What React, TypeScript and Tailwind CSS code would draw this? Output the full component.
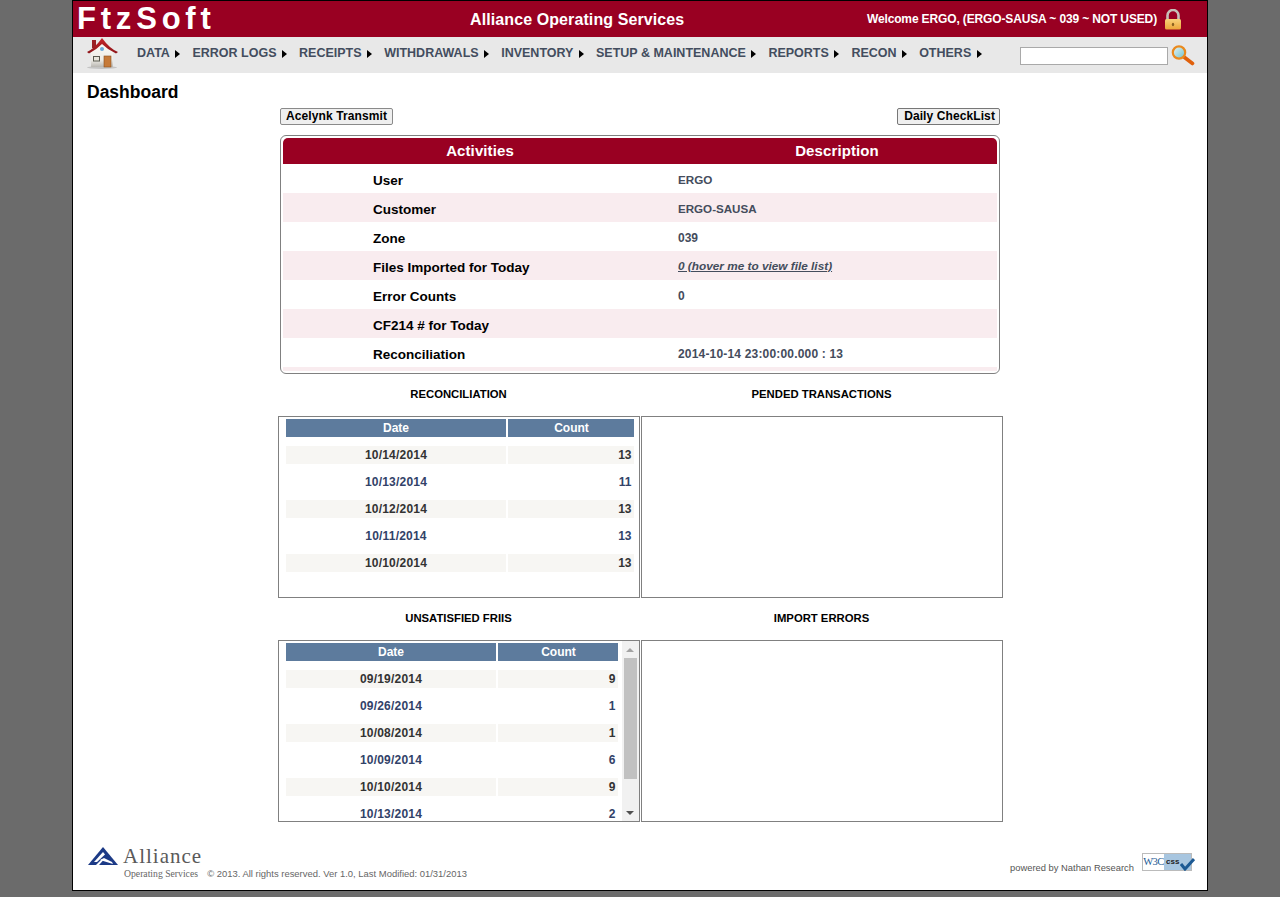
const menu = ["DATA", "ERROR LOGS", "RECEIPTS", "WITHDRAWALS", "INVENTORY", "SETUP & MAINTENANCE", "REPORTS", "RECON", "OTHERS"];
const activities: [string, React.ReactNode, string][] = [
  ["User", "ERGO", "text-[11.7px]"],
  ["Customer", "ERGO-SAUSA", "text-[11.6px]"],
  ["Zone", "039", "text-[12px]"],
  ["Files Imported for Today", <a className="italic underline">0 (hover me to view file list)</a>, "text-[11.8px]"],
  ["Error Counts", "0", "text-[12px]"],
  ["CF214 # for Today", "", "text-[12px]"],
  ["Reconciliation", "2014-10-14 23:00:00.000 : 13", "text-[12px] tracking-[0.18px]"],
];
const recon: [string, string][] = [["10/14/2014", "13"], ["10/13/2014", "11"], ["10/12/2014", "13"], ["10/11/2014", "13"], ["10/10/2014", "13"]];
const friis: [string, string][] = [["09/19/2014", "9"], ["09/26/2014", "1"], ["10/08/2014", "1"], ["10/09/2014", "6"], ["10/10/2014", "9"], ["10/13/2014", "2"]];

function House() {
  return (
    <svg width="34" height="32" viewBox="0 0 34 32" className="mb-[4px] shrink-0">
      <defs>
        <linearGradient id="wall" x1="0" y1="0" x2="0" y2="1">
          <stop offset="0" stopColor="#fbfaf6" />
          <stop offset="0.7" stopColor="#eeece6" />
          <stop offset="1" stopColor="#b9b7b2" />
        </linearGradient>
        <linearGradient id="roof" x1="0" y1="0" x2="0" y2="1">
          <stop offset="0" stopColor="#c8262c" />
          <stop offset="1" stopColor="#8c1418" />
        </linearGradient>
      </defs>
      <ellipse cx="16" cy="30.5" rx="15" ry="1.4" fill="#c4c4c4" />
      <path d="M5 14 L16 6 L27 14 V30 H5 Z" fill="url(#wall)" />
      <rect x="6" y="3" width="4" height="8" fill="#9a2024" />
      <path d="M1 15 Q8 12 16 1 Q24 12 32 15 L30 16.5 Q22 13 16 7 Q10 13 3 16.5 Z" fill="url(#roof)" />
      <circle cx="16" cy="12" r="2" fill="#6aa8d8" />
      <rect x="18" y="19" width="7" height="11" fill="#c67a38" stroke="#8a5020" strokeWidth="0.6" />
      <rect x="7.5" y="19.5" width="6" height="4.5" fill="#e8e6dc" stroke="#5a5a50" strokeWidth="1" />
    </svg>
  );
}

function Lock() {
  return (
    <svg width="18" height="21" viewBox="0 0 18 21" className="shrink-0">
      <defs>
        <linearGradient id="lockbody" x1="0" y1="0" x2="0" y2="1">
          <stop offset="0" stopColor="#f8d27a" />
          <stop offset="1" stopColor="#eca53a" />
        </linearGradient>
      </defs>
      <path d="M3.5 11 V6.5 a5.5 5.5 0 0 1 11 0 V11" fill="none" stroke="#c6c0b8" strokeWidth="2.6" />
      <rect x="1" y="10" width="16" height="10.5" rx="1.5" fill="url(#lockbody)" />
      <ellipse cx="9" cy="15.5" rx="1.2" ry="1.8" fill="#8a6020" />
    </svg>
  );
}

function Magnifier() {
  return (
    <svg width="24" height="21" viewBox="0 0 24 21" className="shrink-0">
      <defs>
        <linearGradient id="lens" x1="0" y1="0" x2="1" y2="1">
          <stop offset="0" stopColor="#eaf6f6" />
          <stop offset="1" stopColor="#6cc0cc" />
        </linearGradient>
      </defs>
      <path d="M13 12 L21.5 18.5" stroke="#e0600c" strokeWidth="3.6" strokeLinecap="round" />
      <circle cx="8" cy="7.5" r="6.2" fill="url(#lens)" stroke="#ea8a1e" strokeWidth="2.2" />
    </svg>
  );
}

function Logo() {
  return (
    <div className="mb-[1px] flex flex-col items-start">
      <div className="flex items-end gap-[5px]">
        <svg width="30" height="19" viewBox="0 0 30 19" className="shrink-0">
          <path d="M15 0 L30 18 H0 Z" fill="#1c3a86" />
          <path d="M15 5 L17 7.5 L9 15 H6 Z" fill="#fff" />
          <path d="M16 11 L24 15 L25 17 L12 13 Z" fill="#fff" />
          <path d="M8 18 L14 12 L15 13.5 L11 18 Z" fill="#fff" />
        </svg>
        <span className="font-['Liberation_Serif',serif] text-[21px] leading-[19px] tracking-[1px] text-[#5a5a5a]">Alliance</span>
      </div>
      <span className="ml-[36px] mt-[2px] font-['Liberation_Serif',serif] text-[9.7px] leading-[11px] text-[#666]">Operating Services</span>
    </div>
  );
}

function DataTable({ rows, cols }: { rows: [string, string][]; cols: string }) {
  return (
    <div className="flex min-w-0 flex-1 flex-col gap-[9px] pl-[7px] pt-[2px]">
      <div className={`grid gap-x-[2px] ${cols}`}>
        <div className="flex h-[18px] items-center justify-center bg-[#5d7b9d] pl-[1px] text-[12px] font-bold text-white">Date</div>
        <div className="flex h-[18px] items-center justify-center bg-[#5d7b9d] pl-[2px] text-[12px] font-bold text-white">Count</div>
      </div>
      {rows.map(([d, c], i) => (
        <div key={d} className={`grid shrink-0 gap-x-[2px] ${cols} ${i % 2 === 0 ? "text-[#333]" : "text-[#324268]"} text-[12px] font-bold`}>
          <div className={`flex h-[18px] items-center justify-center pl-[1px] tracking-[0.2px] ${i % 2 === 0 ? "bg-[#f7f6f3]" : ""}`}>{d}</div>
          <div className={`flex h-[18px] items-center justify-end pr-[2px] ${i % 2 === 0 ? "bg-[#f7f6f3]" : ""}`}>{c}</div>
        </div>
      ))}
    </div>
  );
}

function Panel({ children }: { children?: React.ReactNode }) {
  return <div className="flex h-[182px] w-[362px] overflow-hidden border border-[#808080]">{children}</div>;
}

function SectionTitle({ children }: { children: React.ReactNode }) {
  return <div className="flex h-[42px] w-[362px] items-center justify-center pb-[2px] text-[11.3px] font-bold text-black">{children}</div>;
}

export default function App() {
  return (
    <div className="min-h-[897px] bg-[#6b6b6b] font-['Liberation_Sans',Arial,sans-serif]">
      <div className="mx-auto flex h-[891px] w-[1136px] flex-col border border-black bg-white">
        <header className="flex h-[36px] items-center bg-[#990022] pl-[4px] pr-[25px] text-white">
          <div className="w-[393px] shrink-0 text-[31px] font-bold leading-[36px] tracking-[4.8px]">FtzSoft</div>
          <div className="whitespace-nowrap pt-[2px] text-[16px] font-bold tracking-[0.1px]">Alliance Operating Services</div>
          <div className="ml-auto flex items-center gap-[7px]">
            <span className="whitespace-nowrap text-[12px] font-bold tracking-[-0.14px]">Welcome ERGO, (ERGO-SAUSA ~ 039 ~ NOT USED)</span>
            <Lock />
          </div>
        </header>
        <nav className="flex h-[36px] items-center bg-[#e8e8e8] pl-[13px] pr-[12px]">
          <House />
          <div className="ml-[17px] flex items-center gap-[12.2px] pb-[3px]">
            {menu.map((m) => (
              <div key={m} className="flex items-center gap-[5.4px] whitespace-nowrap text-[12.5px] font-bold text-[#434d5e]">
                <span>{m}</span>
                <span className="mt-[1px] h-0 w-0 border-y-[4px] border-l-[5px] border-y-transparent border-l-black" />
              </div>
            ))}
          </div>
          <div className="ml-auto flex items-center gap-[3px]">
            <input className="mt-[2px] h-[18px] w-[148px] border border-[#a9a9a9] bg-white" />
            <Magnifier />
          </div>
        </nav>
        <main className="flex flex-1 flex-col px-[14px]">
          <h1 className="pt-[8px] text-[17.5px] font-bold leading-[22px] text-black">Dashboard</h1>
          <div className="mx-auto mt-[5px] flex w-[720px] justify-between">
            <button className="h-[17px] rounded-[2px] border border-[#8a8a8a] bg-[#efefef] pb-[1px] pl-[5px] pr-[5px] text-[12px] font-bold leading-none tracking-[0.1px] text-black">Acelynk Transmit</button>
            <button className="h-[17px] rounded-[2px] border border-[#777] bg-[#efefef] pb-[1px] pl-[6px] pr-[4px] text-[12px] font-bold leading-none tracking-[0.1px] text-black">Daily CheckList</button>
          </div>
          <div className="mx-auto mt-[10px] h-[239px] w-[720px] overflow-hidden rounded-[6px] border border-[#808080] px-[2px] pt-[2px]">
            <div className="grid h-[26px] grid-cols-[394px_1fr] rounded-t-[5px] bg-[#990022] text-[15px] font-bold tracking-[0.1px] text-white">
              <div className="flex items-center justify-center">Activities</div>
              <div className="flex items-center justify-center">Description</div>
            </div>
            {activities.map(([a, d, cls], i) => (
              <div key={a} className={`flex h-[29px] items-center ${i % 2 ? "bg-[#f9ecef]" : ""}`}>
                <div className="w-[395px] pl-[90px] pt-[6px] text-[13.5px] font-bold text-black">{a}</div>
                <div className={`pt-[2px] font-bold text-[#444c5c] ${cls}`}>{d}</div>
              </div>
            ))}
            <div className="h-[4px] bg-[#f9ecef]" />
          </div>
          <div className="mx-auto flex w-[725px] justify-between">
            <SectionTitle>RECONCILIATION</SectionTitle>
            <SectionTitle>PENDED TRANSACTIONS</SectionTitle>
          </div>
          <div className="mx-auto flex w-[725px] justify-between">
            <Panel>
              <div className="flex w-full pr-[4px]">
                <DataTable rows={recon} cols="grid-cols-[220px_126px]" />
              </div>
            </Panel>
            <Panel />
          </div>
          <div className="mx-auto flex w-[725px] justify-between">
            <SectionTitle>UNSATISFIED FRIIS</SectionTitle>
            <SectionTitle>IMPORT ERRORS</SectionTitle>
          </div>
          <div className="mx-auto flex w-[725px] justify-between">
            <Panel>
              <DataTable rows={friis} cols="grid-cols-[210px_120px]" />
              <div className="flex w-[17px] shrink-0 flex-col items-center bg-[#f1f1f1]">
                <div className="flex h-[17px] items-center justify-center">
                  <span className="h-0 w-0 border-x-[4px] border-b-[4px] border-x-transparent border-b-[#a3a3a3]" />
                </div>
                <div className="h-[121px] w-[13px] bg-[#c1c1c1]" />
                <div className="flex-1" />
                <div className="flex h-[17px] items-center justify-center">
                  <span className="h-0 w-0 border-x-[4px] border-t-[4px] border-x-transparent border-t-[#505050]" />
                </div>
              </div>
            </Panel>
            <Panel />
          </div>
        </main>
        <footer className="flex h-[58px] items-end justify-between px-[15px] pb-[10px]">
          <div className="flex items-end gap-[5px]">
            <Logo />
            <span className="text-[9.45px] leading-[12px] text-[#666]">© 2013. All rights reserved. Ver 1.0, Last Modified: 01/31/2013</span>
          </div>
          <div className="flex items-end gap-[8px] pb-[9px]">
            <span className="mb-[-3px] text-[9.4px] leading-[12px] text-[#555]">powered by Nathan Research</span>
            <div className="relative flex h-[18px] w-[50px] border border-[#bbb] leading-[16px]">
              <span className="w-[21px] bg-white text-center font-['Liberation_Serif',serif] text-[10.5px] tracking-[-0.5px] text-[#1c5a94]">W3C</span>
              <span className="flex-1 bg-[#a8c6e0] pl-[2px] text-[8px] font-bold text-[#222]">css</span>
              <svg className="absolute -right-[4px] top-[3px]" width="15" height="14" viewBox="0 0 15 14"><path d="M1 7 L5 12 L14 2" fill="none" stroke="#1c5a94" strokeWidth="3" /></svg>
            </div>
          </div>
        </footer>
      </div>
    </div>
  );
}
